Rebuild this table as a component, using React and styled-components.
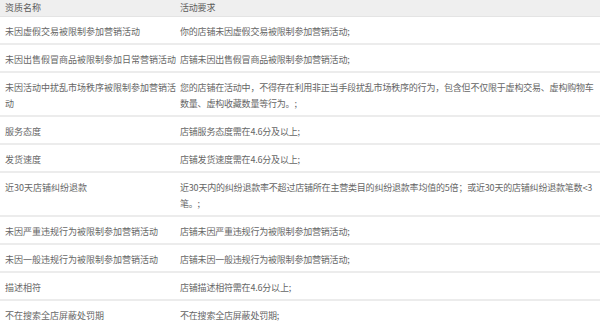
import React from "react";
import styled, { createGlobalStyle } from "styled-components";

const GlobalStyle = createGlobalStyle`
  html, body {
    margin: 0;
    padding: 0;
    background: #ffffff;
    overflow: hidden;
  }
`;

const Page = styled.div`
  width: 600px;
  overflow: hidden;
  font-family: "Noto Sans CJK SC", "Noto Sans", sans-serif;
  font-size: 9px;
  color: #666666;
`;

const Row = styled.div`
  display: grid;
  grid-template-columns: 180px 420px;
  background: ${(p) => (p.head ? "#efefef" : "#ffffff")};
  border-bottom: ${(p) => (p.head ? "1px solid #e4e4e4" : "2px solid #ececec")};
  color: ${(p) => (p.head ? "#5c5c5c" : "#666666")};
`;

const Cell = styled.div`
  padding: ${(p) => (p.head ? "0" : "7px 0 3px")};
  padding-left: ${(p) => (p.first ? "5px" : "0")};
  padding-right: ${(p) => (p.first ? "4px" : "0")};
  line-height: 16px;
  min-width: 0;
  letter-spacing: ${(p) => (p.first ? "0" : "-0.2px")};
`;

const Line = styled.div`
  white-space: nowrap;
`;

const rows = [
  ["未因虚假交易被限制参加营销活动", "你的店铺未因虚假交易被限制参加营销活动;"],
  ["未因出售假冒商品被限制参加日常营销活动", "店铺未因出售假冒商品被限制参加营销活动;"],
  [
    ["未因活动中扰乱市场秩序被限制参加营销活", "动"],
    ["您的店铺在活动中，不得存在利用非正当手段扰乱市场秩序的行为，包含但不仅限于虚构交易、虚构购物车", "数量、虚构收藏数量等行为。;"],
  ],
  ["服务态度", "店铺服务态度需在4.6分及以上;"],
  ["发货速度", "店铺发货速度需在4.6分及以上;"],
  [
    "近30天店铺纠纷退款",
    ["近30天内的纠纷退款率不超过店铺所在主营类目的纠纷退款率均值的5倍；或近30天的店铺纠纷退款笔数<3", "笔。;"],
  ],
  ["未因严重违规行为被限制参加营销活动", "店铺未因严重违规行为被限制参加营销活动;"],
  ["未因一般违规行为被限制参加营销活动", "店铺未因一般违规行为被限制参加营销活动;"],
  ["描述相符", "店铺描述相符需在4.6分以上;"],
  ["不在搜索全店屏蔽处罚期", "不在搜索全店屏蔽处罚期;"],
];

const lines = (text) =>
  (Array.isArray(text) ? text : [text]).map((t, j) => <Line key={j}>{t}</Line>);

export default function App() {
  return (
    <Page>
      <GlobalStyle />
      <Row head>
        <Cell head first>资质名称</Cell>
        <Cell head>活动要求</Cell>
      </Row>
      {rows.map(([name, req], i) => (
        <Row key={i}>
          <Cell first>{lines(name)}</Cell>
          <Cell>{lines(req)}</Cell>
        </Row>
      ))}
    </Page>
  );
}
